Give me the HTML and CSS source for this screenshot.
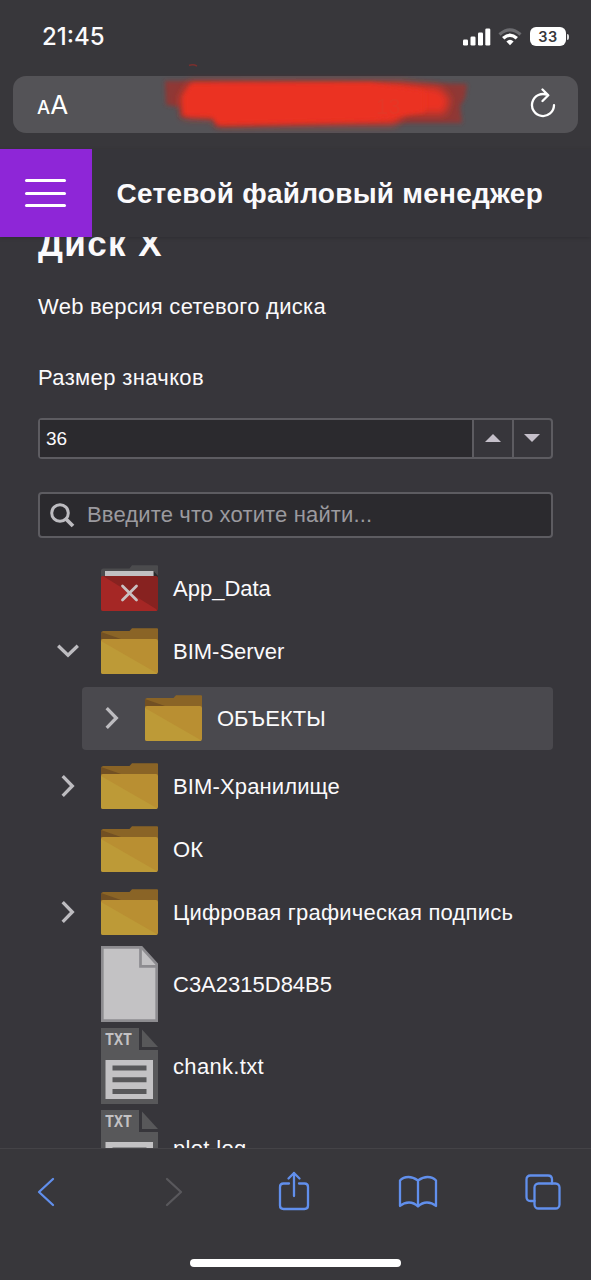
FILE: index.html
```html
<!DOCTYPE html>
<html lang="ru">
<head>
<meta charset="utf-8">
<title>Сетевой файловый менеджер</title>
<link rel="stylesheet" href="styles.css">
</head>
<body>
<svg class="defs" width="0" height="0">
  <symbol id="folder" viewBox="0 0 57 46">
    <path d="M0 5.500a2.500 2.500 0 0 1 2.500-2.500H28.500L31 .3H56q1 0 1 1V20H0z" fill="#8a6426"/>
    <path d="M0 4L20 11H0z" fill="#725023"/>
    <rect y="11" width="57" height="35" rx="2" fill="#b98f32"/>
    <path d="M0 13L53 43.500L56 45.500Q55.500 46 55 46H2Q0 46 0 44z" fill="#bd9a37"/>
  </symbol>
  <symbol id="folder-denied" viewBox="0 0 57 46">
    <path d="M0 6a2.500 2.500 0 0 1 2.500-2.500H28.500L31 .3H56q1 0 1 1V20H0z" fill="#4b4b4d"/>
    <path d="M52.500 6L57 11V14H52.500z" fill="#28282a"/>
    <rect x="4" y="6" width="48.500" height="8" fill="#c1c0c2"/>
    <rect y="11" width="57" height="35" rx="2" fill="#872220"/>
    <path d="M0 13Q0 11 2 11L55 44L56 45.500Q55.500 46 55 46H2Q0 46 0 44z" fill="#a52725"/>
    <path d="M21.500 21L35.500 35M35.500 21L21.500 35" stroke="#c9c0c1" stroke-width="2.800" stroke-linecap="round"/>
  </symbol>
  <symbol id="file" viewBox="0 0 57 76">
    <path d="M1.300 1.300H40.500L55.700 18V74.700H1.300z" fill="#c3c2c4" stroke="#8d8c90" stroke-width="2.700"/>
    <path d="M39.500 1V20.300H56" fill="none" stroke="#8d8c90" stroke-width="2.700"/>
  </symbol>
  <symbol id="file-txt" viewBox="0 0 57 76">
    <path d="M0 0H38V22H57V76H0z" fill="#58585a"/>
    <path d="M41 1.500L57 19H41z" fill="#58585a"/>
    <text class="file-type" transform="translate(4 16.500) scale(1 1.250)">TXT</text>
    <rect x="4.500" y="32" width="47.500" height="39" fill="#c3c2c4"/>
    <path d="M11.500 40H45.500M11.500 51.700H45.500M11.500 63.500H45.500" stroke="#58585a" stroke-width="5"/>
  </symbol>
  <symbol id="chevron" viewBox="0 0 22 22">
    <path d="M5.700 1.200L15.300 11L5.700 20.800" fill="none" stroke="#bdbcc0" stroke-width="3.300"/>
  </symbol>
</svg>

<div class="status-bar">
  <span class="time">21:45</span>
  <div class="status-icons">
    <svg width="28" height="18" viewBox="0 0 28 18" fill="#fff"><rect y="11.500" width="5" height="6" rx="1.300"/><rect x="7.500" y="8.500" width="5" height="9" rx="1.300"/><rect x="15" y="4.500" width="5" height="13" rx="1.300"/><rect x="22.300" y=".5" width="5" height="17" rx="1.300"/></svg>
    <svg class="wifi" width="24" height="18" viewBox="0 0 24 18"><path d="M1.500 6.500Q12-2.800 22.500 6.500" fill="none" stroke="#6c6c70" stroke-width="3.200"/><path d="M5.200 10.200Q12 4.200 18.800 10.200" fill="none" stroke="#fff" stroke-width="3.500"/><path d="M8.400 13.600Q12 10 15.600 13.600L12 17.300z" fill="#fff"/></svg>
    <div class="battery">33</div><i class="battery-tip"></i>
  </div>
</div>

<div class="address-row">
  <div class="address-bar">
    <span class="text-size"><small>A</small><span class="big-a">A</span></span>
    <svg class="reload" width="26" height="30" viewBox="0 0 26 30" fill="none" stroke="#fff" stroke-width="2.300" stroke-linecap="round" stroke-linejoin="round"><path d="M24 17.200A11 11 0 1 1 17.500 7M12.500 1.500L18.300 7.200L12.500 13"/></svg>
    <svg class="marker" width="330" height="80" viewBox="150 56 330 80">
      <filter id="soft" x="-10%" y="-30%" width="120%" height="160%"><feGaussianBlur stdDeviation="2"/></filter>
      <filter id="softer" x="-10%" y="-30%" width="120%" height="160%"><feGaussianBlur stdDeviation="4"/></filter>
      <path d="M165 81H190L410 83L467 84L465 98L460 106L462 123H350L215 127V119L180 117V107L166 105z" fill="#8f3836" filter="url(#soft)"/>
      <path d="M190 83H400L440 88L450 99L445 114H404L395 124L218 125L214 118L184 117L180 98z" fill="#eb3323" filter="url(#softer)"/>
      <path d="M192 84L370 83L425 91V112L375 120L260 123L218 124L213 116L184 115V96z" fill="#eb3323" filter="url(#soft)"/>
      <path d="M189 65.500Q193 64 197 66" stroke="#7a302e" stroke-width="1.500" fill="none"/>
      <text class="masked" x="376" y="114">13</text>
    </svg>
  </div>
</div>

<header class="app-header">
  <div class="menu"><i></i><i></i><i></i></div>
  <div class="app-title"><span>Сетевой файловый менеджер</span></div>
</header>

<main class="content">
  <h1>Диск X</h1>
  <p class="subtitle">Web версия сетевого диска</p>
  <p class="label">Размер значков</p>
  <div class="spinner">
    <div class="spinner-value">36</div>
    <div class="spinner-btn"><svg width="16" height="8"><path d="M0 8L8 0L16 8z" fill="#c5c0ca"/></svg></div>
    <div class="spinner-btn"><svg width="16" height="8"><path d="M0 0H16L8 8z" fill="#c5c0ca"/></svg></div>
  </div>
  <div class="search">
    <svg width="25" height="25" viewBox="0 0 25 25" fill="none" stroke="#bdbcc0"><circle cx="10" cy="10" r="8.300" stroke-width="3"/><path d="M15.500 15.500L23 23" stroke-width="3.800"/></svg>
    <span>Введите что хотите найти...</span>
  </div>
  <div class="tree">
    <div class="row"><span class="toggle"></span><svg class="folder"><use href="#folder-denied"/></svg><span class="name">App_Data</span></div>
    <div class="row"><span class="toggle open"><svg><use href="#chevron"/></svg></span><svg class="folder"><use href="#folder"/></svg><span class="name">BIM-Server</span></div>
    <div class="row selected"><span class="toggle"><svg><use href="#chevron"/></svg></span><svg class="folder"><use href="#folder"/></svg><span class="name">ОБЪЕКТЫ</span></div>
    <div class="row"><span class="toggle"><svg><use href="#chevron"/></svg></span><svg class="folder"><use href="#folder"/></svg><span class="name loose">BIM-Хранилище</span></div>
    <div class="row"><span class="toggle"></span><svg class="folder"><use href="#folder"/></svg><span class="name wide">ОК</span></div>
    <div class="row"><span class="toggle"><svg><use href="#chevron"/></svg></span><svg class="folder"><use href="#folder"/></svg><span class="name wide">Цифровая графическая подпись</span></div>
    <div class="row file-row"><span class="toggle"></span><svg class="file"><use href="#file"/></svg><span class="name">C3A2315D84B5</span></div>
    <div class="row file-row"><span class="toggle"></span><svg class="file"><use href="#file-txt"/></svg><span class="name wider">chank.txt</span></div>
    <div class="row file-row"><span class="toggle"></span><svg class="file"><use href="#file-txt"/></svg><span class="name wider">plot.log</span></div>
  </div>
</main>

<footer class="toolbar">
  <nav class="tools">
    <svg width="18" height="30" viewBox="0 0 18 30"><path d="M16 2L2 15L16 28"/></svg>
    <svg class="off" width="18" height="30" viewBox="0 0 18 30"><path d="M2 2L16 15L2 28"/></svg>
    <svg class="share" width="32" height="40" viewBox="0 0 32 40"><path d="M11 12.500H5.500Q2 12.500 2 16V34.500Q2 38 5.500 38H26.500Q30 38 30 34.500V16Q30 12.500 26.500 12.500H21M16 25V2M10.500 7.500L16 2L21.500 7.500"/></svg>
    <svg class="book" width="40" height="34" viewBox="0 0 40 34"><path d="M20 31.500V5.500Q15 2 10.500 2Q5 2 2 5.500V31Q6 27.500 11 27.500Q16 27.500 20 31.500Q24 27.500 29 27.500Q34 27.500 38 31V5.500Q35 2 29.500 2Q25 2 20 5.500"/></svg>
    <svg class="tabs" width="38" height="38" viewBox="0 0 38 38"><rect x="10.500" y="10.500" width="25" height="25" rx="4"/><path d="M10.500 28H6.500Q2.500 28 2.500 24V6.500Q2.500 2.500 6.500 2.500H24Q28 2.500 28 6.500V10.500"/></svg>
  </nav>
  <div class="home-indicator"></div>
</footer>
</body>
</html>
```
FILE: styles.css
```css
* { box-sizing: border-box; }
body {
  margin: 0;
  width: 591px;
  height: 1280px;
  overflow: hidden;
  display: flex;
  flex-direction: column;
  background: #37363b;
  color: #fbfafc;
  font: 22px/26px "Liberation Sans", Arial, sans-serif;
}
svg { display: block; flex: none; }
.defs { position: absolute; }

.status-bar {
  height: 76px;
  flex: none;
  display: flex;
  justify-content: space-between;
  padding: 22px 22px 0 42px;
  background: #38373b;
}
.time { font: 500 24px/30px Inter, sans-serif; }
.status-icons { display: flex; align-items: center; height: 29px; }
.wifi { margin: 0 8px 0 7px; }
.battery {
  width: 36px;
  height: 19px;
  border-radius: 6px;
  background: #fff;
  color: #38373b;
  font: 600 14.500px/19px Inter, sans-serif;
  letter-spacing: .4px;
  text-align: center;
}
.battery-tip { width: 2px; height: 6px; margin-left: 1px; border-radius: 0 3px 3px 0; background: #ddd; }

.address-row { height: 73px; flex: none; padding: 0 13px; background: #38373b; }
.address-bar {
  position: relative;
  height: 57px;
  border-radius: 13px;
  background: #545357;
  display: flex;
  align-items: center;
  justify-content: space-between;
  padding: 0 22px 0 24px;
}
.text-size { margin-top: 2px; font: 400 26px/30px Inter, sans-serif; color: #fff; }
.text-size small { font-size: 18.500px; font-weight: 500; }
.reload { margin-top: -4px; }
.marker { position: absolute; left: 137px; top: -20px; }
.masked { font: 22px "Liberation Sans", sans-serif; fill: #dc3f2c; opacity: .45; }

.app-header {
  position: relative;
  height: 88px;
  flex: none;
  display: flex;
  background: #36353a;
  box-shadow: 0 1px 4px rgba(0, 0, 0, .16);
}
.menu {
  width: 91.500px;
  background: #8e26d7;
  display: flex;
  flex-direction: column;
  align-items: center;
  justify-content: center;
  gap: 9.500px;
}
.menu i { width: 41px; height: 3px; border-radius: 2px; background: #fff; }
.app-title {
  padding: 28px 0 0 25px;
  font: bold 28px/34px "Liberation Sans", Arial, sans-serif;
  letter-spacing: .25px;
  white-space: nowrap;
}

.content { flex: 1; min-height: 0; overflow: hidden; padding: 0 38px; }
h1 { margin: -15px 0 0; font-size: 35px; line-height: 44px; font-weight: bold; letter-spacing: 1.400px; white-space: nowrap; }
.subtitle { margin: 28px 0 0; letter-spacing: .29px; }
.label { margin: 45px 0 0; letter-spacing: .36px; }
.spinner {
  display: flex;
  height: 41px;
  margin-top: 27px;
  border: 2px solid #5d5c61;
  border-radius: 4px;
}
.spinner-value { flex: 1; padding-left: 6px; background: #2b2a2e; font-size: 19px; line-height: 37px; }
.spinner-btn {
  width: 39.500px;
  border-left: 2px solid #5d5c61;
  display: flex;
  align-items: center;
  justify-content: center;
  padding-bottom: 1px;
}
.search {
  height: 46px;
  margin-top: 33px;
  border: 2px solid #5d5c61;
  border-radius: 4px;
  background: #2b2a2e;
  color: #9b9a9f;
  display: flex;
  align-items: center;
  gap: 12px;
  padding-left: 10px;
  letter-spacing: .15px;
}

.tree { margin-top: 19px; }
.row { height: 63px; display: flex; align-items: center; white-space: nowrap; }
.selected { margin: 4px 0 5px 44px; border-radius: 4px; background: #4a494e; }
.file-row { height: 82px; padding-bottom: 2px; }
.toggle { width: 63px; padding: 0 0 2px 19px; flex: none; }
.toggle svg { width: 22px; height: 22px; }
.open svg { transform: rotate(90deg); }
.folder { width: 57px; height: 46px; margin-bottom: 1px; }
.file { width: 57px; height: 76px; }
.file-type { font: bold 15px "Liberation Mono", monospace; fill: #c3c2c4; }
.name { margin-left: 15px; padding-top: 1px; }
.file-row .name { padding-top: 2px; }
.loose { letter-spacing: .13px; }
.wide { letter-spacing: .22px; }
.wider { letter-spacing: .32px; }

.toolbar {
  height: 132px;
  flex: none;
  border-top: 1px solid #444347;
  background: #38373b;
  display: flex;
  flex-direction: column;
  align-items: center;
}
.tools {
  width: 100%;
  height: 85px;
  display: flex;
  align-items: center;
  padding-left: 36.500px;
  fill: none;
  stroke: #618fec;
  stroke-width: 2.300;
  stroke-linecap: round;
  stroke-linejoin: round;
}
.off { stroke: #59585c; margin-left: 110px; }
.share { margin-left: 95.500px; margin-bottom: 2px; }
.book { margin-left: 88px; }
.tabs { margin-left: 86px; }
.home-indicator { width: 211px; height: 8px; margin-top: 25px; border-radius: 4px; background: #fff; }
```
